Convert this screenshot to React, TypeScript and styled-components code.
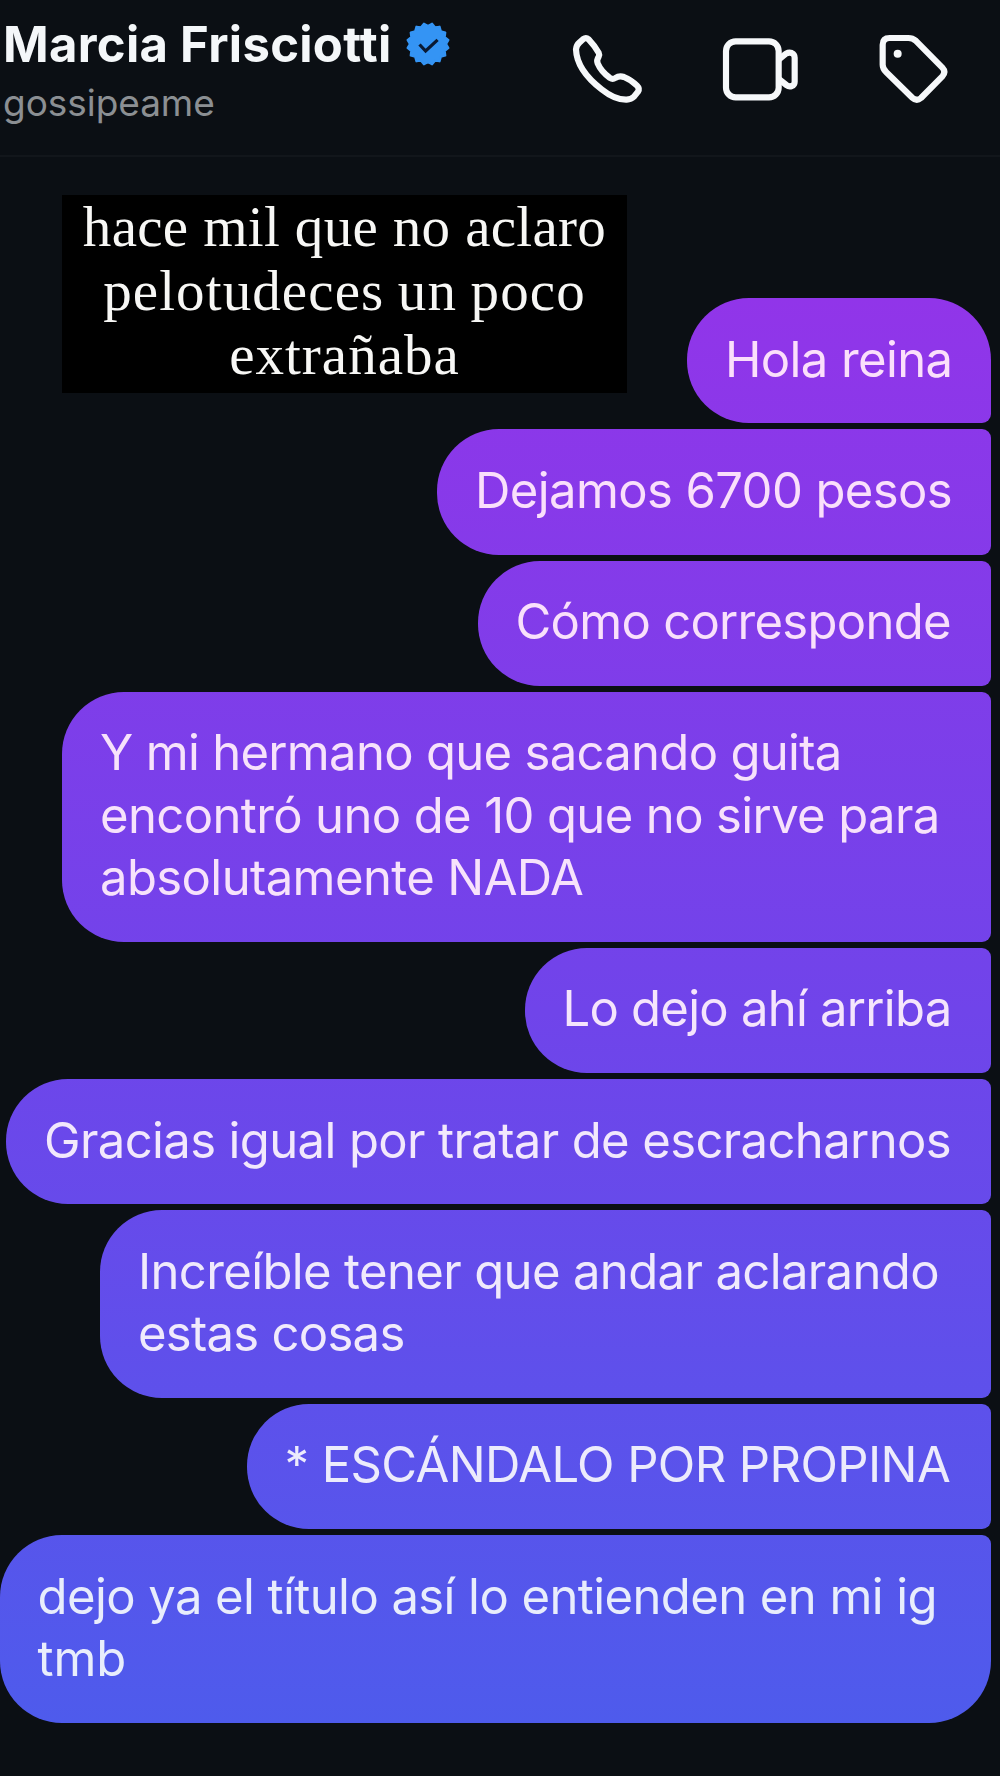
import React from "react";
import styled, { createGlobalStyle } from "styled-components";

const GlobalStyle = createGlobalStyle`
  html, body { margin: 0; padding: 0; background: #0b0f14; }
`;

const Screen = styled.main`
  position: relative;
  width: 1000px;
  height: 1776px;
  overflow: hidden;
  background: #0b0f14;
  font-family: Inter, "Liberation Sans", sans-serif;
`;

const Header = styled.header`
  box-sizing: border-box;
  height: 157px;
  display: flex;
  justify-content: space-between;
  padding: 15px 35px 0 3px;
  border-bottom: 2px solid #12161b;
`;

const Identity = styled.div`
  display: flex;
  flex-direction: column;
`;

const NameRow = styled.div`
  display: flex;
  align-items: center;
  height: 60px;
  gap: 13px;
`;

const Name = styled.h1`
  margin: 0;
  font-size: 49px;
  line-height: 60px;
  font-weight: 700;
  letter-spacing: 0.3px;
  color: #f4f7f9;
  white-space: nowrap;
`;

const Username = styled.p`
  margin: 5px 0 0 0;
  font-size: 37px;
  line-height: 46px;
  letter-spacing: -0.05px;
  color: #8b8f93;
`;

const Actions = styled.nav`
  display: flex;
  padding-top: 5px;
`;

const ActionIcon = styled.svg<{ $gap?: number }>`
  display: block;
  width: 100px;
  height: 100px;
  margin-left: ${(p) => p.$gap ?? 0}px;
  fill: none;
  stroke: #f6f8fa;
  stroke-width: 18.5;
  stroke-linecap: round;
  stroke-linejoin: round;
`;

const Badge = styled.svg`
  display: block;
  width: 46px;
  height: 46px;
  margin-top: -3px;
`;

const Sticker = styled.aside`
  position: absolute;
  left: 62px;
  top: 195px;
  box-sizing: border-box;
  width: 565px;
  height: 198px;
  padding: 0 0 6px 0;
  display: flex;
  flex-direction: column;
  align-items: center;
  justify-content: center;
  background: #000;
  color: #f7f7f5;
  font-family: "Liberation Serif", serif;
  font-size: 57px;
`;

const StickerLine = styled.span<{ $tracking: number; $word?: number }>`
  flex: none;
  line-height: 64px;
  white-space: nowrap;
  letter-spacing: ${(p) => p.$tracking}px;
  word-spacing: ${(p) => p.$word ?? 0}px;
`;

const Thread = styled.section`
  display: flex;
  flex-direction: column;
  align-items: flex-end;
  gap: 6px;
  padding: 141px 9px 0 0;
`;

const Bubble = styled.div<{ $width: number; $ink: string; $first: boolean; $last: boolean }>`
  box-sizing: border-box;
  flex: none;
  width: ${(p) => p.$width}px;
  padding: 30.5px 0 32.5px 38px;
  border-radius: 62px ${(p) => (p.$first ? 62 : 9)}px ${(p) => (p.$last ? 62 : 9)}px 62px;
  background: linear-gradient(180deg, #9135e9 298px, #7044ea 1010px, #4e5bec 1723px) fixed;
  color: ${(p) => p.$ink};
  font-size: 49px;
`;

const Line = styled.span<{ $tracking: number }>`
  display: block;
  line-height: 62.3px;
  letter-spacing: ${(p) => p.$tracking}px;
  white-space: nowrap;
`;

type Message = { width: number; ink: string; lines: [string, number][] };

const messages: Message[] = [
  { width: 304, ink: "#fbdffb", lines: [["Hola reina", -0.6]] },
  { width: 554, ink: "#fadffb", lines: [["Dejamos 6700 pesos", -0.6]] },
  { width: 513.5, ink: "#f9e0fb", lines: [["Cómo corresponde", -0.72]] },
  {
    width: 929,
    ink: "#f7e2fb",
    lines: [
      ["Y mi hermano que sacando guita", -0.69],
      ["encontró uno de 10 que no sirve para", -0.62],
      ["absolutamente NADA", -0.6],
    ],
  },
  { width: 466.5, ink: "#f5e5fc", lines: [["Lo dejo ahí arriba", -0.75]] },
  { width: 985, ink: "#f2e8fc", lines: [["Gracias igual por tratar de escracharnos", -0.62]] },
  {
    width: 891,
    ink: "#f0eafc",
    lines: [
      ["Increíble tener que andar aclarando", -0.63],
      ["estas cosas", -0.72],
    ],
  },
  { width: 744.5, ink: "#ecebfc", lines: [["* ESCÁNDALO POR PROPINA", -0.6]] },
  {
    width: 991.5,
    ink: "#e8edfc",
    lines: [
      ["dejo ya el título así lo entienden en mi ig", -0.58],
      ["tmb", -0.1],
    ],
  },
];

const sealPoints = Array.from({ length: 32 }, (_, i) => {
  const radius = i % 2 ? 20.9 : 18.2;
  const angle = ((i * 11.25) * Math.PI) / 180;
  return `${(23 + radius * Math.cos(angle)).toFixed(2)},${(23 + radius * Math.sin(angle)).toFixed(2)}`;
}).join(" ");

function VerifiedBadge() {
  return (
    <Badge viewBox="0 0 46 46" aria-label="Verificado">
      <polygon points={sealPoints} fill="#3494f4" stroke="#3494f4" strokeWidth="2" strokeLinejoin="round" />
      <path d="M14.5 23.5L20.6 30L32.6 18.8" fill="none" stroke="#0a1a33" strokeWidth="3.2" />
    </Badge>
  );
}

function PhoneIcon() {
  return (
    <ActionIcon viewBox="0 0 300 300" aria-label="Llamar">
      <path d="M48 88 Q49 76 58 68 L70 57 Q78 51 86 58 Q104 77 116 98 Q119 104 116 110 Q109 120 113 130 Q123 154 150 174 Q158 179 166 174 Q178 166 192 171 Q214 180 231 197 Q240 206 234 215 L222 230 Q214 238 200 239 Q165 240 125 208 Q50 150 48 88Z" />
    </ActionIcon>
  );
}

function VideoIcon() {
  return (
    <ActionIcon viewBox="0 0 300 300" $gap={50} aria-label="Videollamada">
      <rect x="48" y="64" width="158" height="168" rx="29" />
      <path d="M208 117 L228 101 Q237 96 245 99 Q254 103 254 113 V185 Q254 195 245 198 Q237 201 229 195 L208 178" />
    </ActionIcon>
  );
}

function TagIcon() {
  return (
    <ActionIcon viewBox="0 0 300 300" $gap={55} aria-label="Etiqueta">
      <path d="M53 74 Q53 54 74 54 H130 Q143 54 152 62 L232 143 Q244 156 232 169 L168 234 Q155 245 142 233 L64 157 Q53 146 53 134Z" />
      <circle cx="98" cy="101" r="12" fill="#f6f8fa" stroke="none" />
    </ActionIcon>
  );
}

export default function App() {
  return (
    <Screen>
      <GlobalStyle />
      <Header>
        <Identity>
          <NameRow>
            <Name>Marcia Frisciotti</Name>
            <VerifiedBadge />
          </NameRow>
          <Username>gossipeame</Username>
        </Identity>
        <Actions>
          <PhoneIcon />
          <VideoIcon />
          <TagIcon />
        </Actions>
      </Header>
      <Thread>
        {messages.map((m, i) => (
          <Bubble
            key={i}
            $width={m.width}
            $ink={m.ink}
            $first={i === 0}
            $last={i === messages.length - 1}
          >
            {m.lines.map(([text, tracking]) => (
              <Line key={text} $tracking={tracking}>
                {text}
              </Line>
            ))}
          </Bubble>
        ))}
      </Thread>
      <Sticker>
        <StickerLine $tracking={0.3} $word={0.2}>hace mil que no aclaro</StickerLine>
        <StickerLine $tracking={1.1} $word={-1.8}>pelotudeces un poco</StickerLine>
        <StickerLine $tracking={1}>extrañaba</StickerLine>
      </Sticker>
    </Screen>
  );
}
